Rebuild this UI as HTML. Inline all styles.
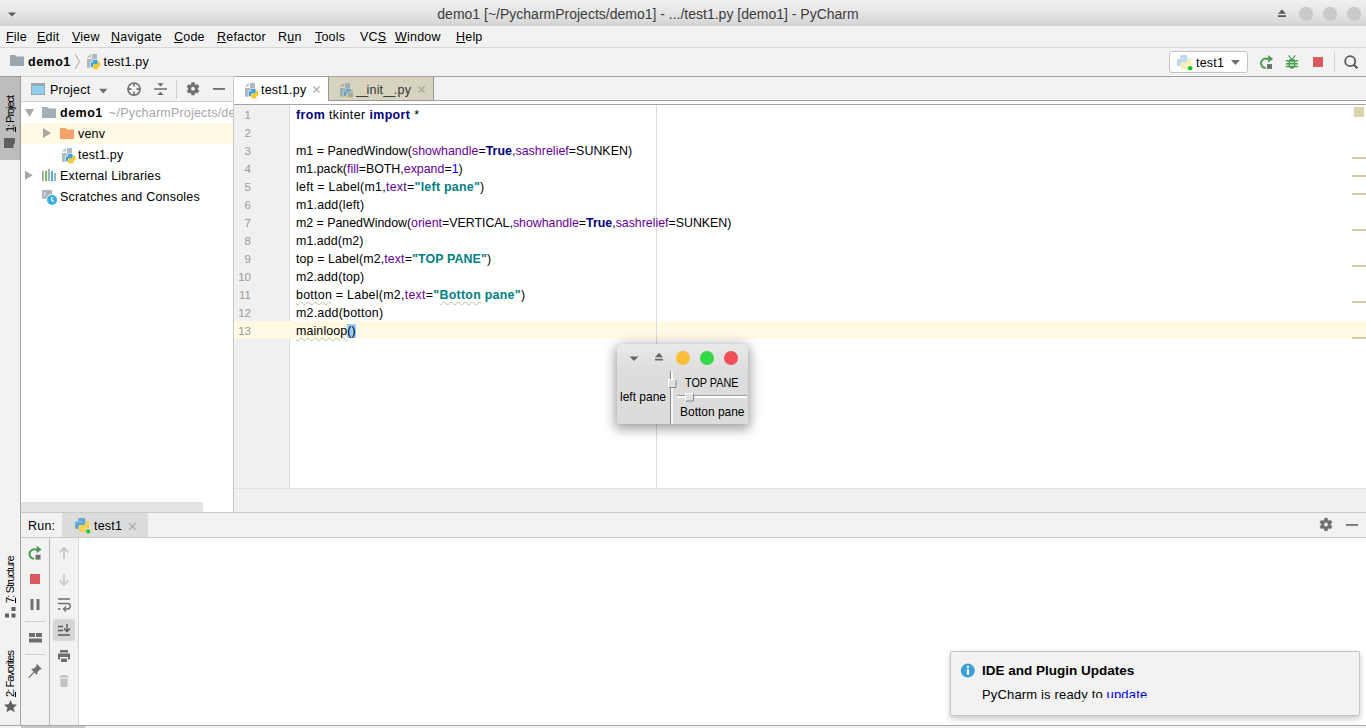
<!DOCTYPE html>
<html><head><meta charset="utf-8"><title>PyCharm</title>
<style>
*{box-sizing:border-box;margin:0;padding:0}
html,body{width:1366px;height:728px;overflow:hidden;background:#f2f2f2}
body{font-family:"Liberation Sans",sans-serif;font-size:12.5px;letter-spacing:.2px;color:#000;position:relative}
.abs{position:absolute}
.tk{font-size:13px;letter-spacing:0;transform-origin:0 0}
.vt{transform-origin:0 0;transform:rotate(-90deg);font-size:11px;letter-spacing:-1.050px;line-height:16px}
.t{position:absolute;white-space:nowrap;line-height:16px}
u{text-decoration:underline;text-underline-offset:1px}
#titlebar{left:0;top:0;width:1366px;height:26px;background:linear-gradient(#f0f0f0,#e7e7e7 45%,#d3d3d3)}
#title{left:0;width:1296px;top:6px;text-align:center;font-size:14px;letter-spacing:0;color:#3c3c3c}
#menubar{left:0;top:26px;width:1366px;height:22px;background:#f2f2f2;border-bottom:1px solid #d6d6d6}
#navbar{left:0;top:48px;width:1366px;height:29px;background:#f2f2f2;border-bottom:1px solid #d4d4d4}
.code{font-size:12.4px;letter-spacing:0;line-height:18px;margin-top:1px}
.kw{color:#000080;font-weight:bold}
.pa{color:#660099}
.st{color:#008080;font-weight:bold}
.nu{color:#0000ff}
.ln{margin-top:1px;position:absolute;left:234px;width:17px;text-align:right;color:#999;font-size:11.5px;letter-spacing:0;line-height:18px}
.wav{text-decoration:underline wavy #b9c79a 1px;text-underline-offset:2px}
</style></head><body>

<!-- title bar -->
<div id="titlebar" class="abs"></div>
<div id="title" class="t">demo1 [~/PycharmProjects/demo1] - .../test1.py [demo1] - PyCharm</div>
<svg class="abs" style="left:0;top:0" width="1366" height="26">
 <path d="M8 12.5h8l-4 4z" fill="#5a5a5a"/>
 <path d="M1278 13.800l4-4.300 4 4.300zM1278 15.200h8v1.700h-8z" fill="#5a5a5a"/>
 <circle cx="1306" cy="13.7" r="7" fill="#c9c9c9"/><circle cx="1330" cy="13.7" r="7" fill="#c9c9c9"/><circle cx="1354" cy="13.7" r="7" fill="#c9c9c9"/>
</svg>

<!-- menu bar -->
<div id="menubar" class="abs"></div>
<div class="t" style="left:6px;top:29px"><u>F</u>ile</div>
<div class="t" style="left:37px;top:29px"><u>E</u>dit</div>
<div class="t" style="left:72px;top:29px"><u>V</u>iew</div>
<div class="t" style="left:111px;top:29px"><u>N</u>avigate</div>
<div class="t" style="left:174px;top:29px"><u>C</u>ode</div>
<div class="t" style="left:217px;top:29px"><u>R</u>efactor</div>
<div class="t" style="left:278px;top:29px">R<u>u</u>n</div>
<div class="t" style="left:315px;top:29px"><u>T</u>ools</div>
<div class="t" style="left:360px;top:29px">VC<u>S</u></div>
<div class="t" style="left:395px;top:29px"><u>W</u>indow</div>
<div class="t" style="left:456px;top:29px"><u>H</u>elp</div>

<!-- nav bar -->
<div id="navbar" class="abs"></div>
<svg class="abs" style="left:0;top:48px" width="160" height="28">
 <path d="M10 7h5l1.5 1.5H24V18H10z" fill="#9aa7b0"/>
 <path d="M75 6l4.5 7.5L75 21" fill="none" stroke="#a5a5a5" stroke-width="1"/>
 <g transform="translate(86,5)"><use href="#pyfile"/></g>
</svg>
<div class="t" style="left:28px;top:54px;font-weight:bold;letter-spacing:.5px">demo1</div>
<div class="t" style="left:103.5px;top:54px">test1.py</div>


<!-- left strip -->
<div class="abs" style="left:0;top:77px;width:21px;height:649px;background:#f2f2f2;border-right:1px solid #a6a6a6"></div>
<div class="abs" style="left:0;top:76px;width:21px;height:84px;background:#bdbdbd;border-top:1px solid #9a9a9a;border-right:1px solid #9a9a9a"></div>
<div class="t vt" style="left:2px;top:132px;width:16px">&#8203;<u>1</u>: Project</div>
<svg class="abs" style="left:3px;top:136px" width="14" height="14"><path d="M1 2h11v5l-1.500 1.500V12H1z" fill="#5f5f5f"/></svg>
<div class="t vt" style="left:2px;top:603px;letter-spacing:-.85px">&#8203;<u>7</u>: Structure</div>
<svg class="abs" style="left:4px;top:606px" width="14" height="14"><path d="M7.500 1h4v4h-4zM1 7.500h4v4H1zM7.500 7.500h4v4h-4z" fill="#5f5f5f"/></svg>
<div class="t vt" style="left:2px;top:697px;letter-spacing:-.95px">&#8203;<u>2</u>: Favorites</div>
<svg class="abs" style="left:3px;top:699px" width="16" height="16"><path d="M7.500 1l1.900 4.300 4.600.4-3.500 3 1.100 4.600-4.100-2.500-4.100 2.500 1.100-4.600-3.500-3 4.600-.4z" fill="#5f5f5f"/></svg>

<!-- project panel -->
<div class="abs" style="left:21px;top:77px;width:212px;height:25px;background:#f2f2f2;border-bottom:1px solid #d2d2d2"></div>
<div class="abs" style="left:21px;top:102px;width:212px;height:410px;background:#fff"></div>
<div class="abs" style="left:233px;top:77px;width:1px;height:435px;background:#c9c9c9"></div>
<svg class="abs" style="left:21px;top:77px" width="212" height="25">
 <rect x="10.500" y="6.500" width="13" height="11" fill="#8fd0ee" stroke="#9aa7b0"/><rect x="10" y="6" width="14" height="3" fill="#9aa7b0"/>
 <path d="M78 11.800h8.400l-4.200 4.700z" fill="#6e6e6e"/>
 <g fill="none" stroke="#6e6e6e" stroke-width="1.600"><circle cx="113" cy="12.100" r="6.100"/><path d="M113 6v3.600M113 14.600v3.600M106.900 12.100h3.600M115.500 12.100h3.600"/></g>
 <path d="M133 11.200h13v1.500h-13zM136.300 6.200h6.400l-3.200 3.400zM136.300 18.100h6.400l-3.200-3.400z" fill="#6e6e6e"/>
 <path d="M155.500 3v19" stroke="#d0d0d0"/>
 <g transform="translate(172,11.800) scale(.95)"><use href="#gear"/></g>
 <path d="M192 11h12v1.800h-12z" fill="#6e6e6e"/>
</svg>
<div class="t" style="left:50px;top:82px">Project</div>
<div class="abs" style="left:21px;top:123px;width:212px;height:21px;background:#fffae3"></div>
<svg class="abs" style="left:21px;top:102px" width="212" height="106">
 <path d="M4 7h9l-4.500 8z" fill="#a6a6a6"/>
 <path d="M21 5h5.500l1.500 1.500H35V16H21z" fill="#a3afb7"/>
 <path d="M22 26l8 5-8 5z" fill="#a6a6a6"/>
 <path d="M39 26h5.500l1.500 1.500H53V37H39z" fill="#f4a26b"/>
 <g transform="translate(40,45)"><use href="#pyfile"/></g>
 <path d="M4 68.700l7.800 4.500-7.800 4.500z" fill="#a6a6a6"/>
 <g fill="none" stroke-width="1.800"><path d="M21.900 69v9.900M28 67.100v11.800M34.100 71v7.900" stroke="#9aa7b0"/><path d="M25 69v9.900" stroke="#62b543"/><path d="M31 69v9.900" stroke="#35a5dd"/></g>
 <path d="M21 88.100h10v8.700H21z" fill="#a9b4bb"/><path d="M22.300 89.800l2.400 2-2.400 2" stroke="#f4f4f4" fill="none" stroke-width="1"/>
 <circle cx="31" cy="97.900" r="5.800" fill="#fff"/><circle cx="31" cy="97.900" r="5" fill="#3cb0e0"/><path d="M30.800 95v3l1.800 1.500" stroke="#fff" fill="none" stroke-width="1.200"/>
</svg>
<div class="t" style="left:60px;top:104.500px;font-weight:bold;letter-spacing:.5px">demo1</div>
<div class="t" style="left:109px;top:104.500px;color:#a6a6a6;width:124px;overflow:hidden">~/PycharmProjects/demo1</div>
<div class="t" style="left:78px;top:125.500px">venv</div>
<div class="t" style="left:78px;top:146.500px">test1.py</div>
<div class="t" style="left:60px;top:167.500px">External Libraries</div>
<div class="t" style="left:60px;top:188.500px">Scratches and Consoles</div>
<div class="abs" style="left:21px;top:502px;width:182px;height:10px;background:#e3e3e3"></div>


<!-- editor tabs -->
<div class="abs" style="left:234px;top:76px;width:1132px;height:1px;background:#a3a3a3"></div>
<div class="abs" style="left:234px;top:77px;width:1132px;height:24px;background:#f2f2f2;border-bottom:1px solid #a3a3a3"></div>
<div class="abs" style="left:234px;top:101px;width:1132px;height:3px;background:#fff"></div>
<div class="abs" style="left:234px;top:104px;width:1132px;height:1px;background:#a3a3a3"></div>
<div class="abs" style="left:234px;top:77px;width:94px;height:27px;background:#fff"></div>
<div class="abs" style="left:328px;top:77px;width:106px;height:24px;background:#d6d4bf;border:1px solid #979797;border-top:0"></div>
<svg class="abs" style="left:234px;top:77px" width="210" height="24">
 <g transform="translate(10,5)"><use href="#pyfile"/></g>
 <path d="M79.500 9.500l6 6m0-6l-6 6" stroke="#a8a8a8" stroke-width="1.100"/>
 <g transform="translate(105,5)" opacity=".85">
  <path d="M1 4.600L4.700 1v3.600z" fill="#9aa7b0"/><path d="M6 1h5v13.800H1V6h5z" fill="#9aa7b0"/>
  <g transform="translate(4.700,6.800) scale(.67)"><use href="#pylogo" stroke="#d6d4bf" stroke-width="2.400"/><use href="#pyhalf" fill="#3e9fdb"/><use href="#pyhalf" fill="#fcc81c" transform="rotate(180 7.150 7.050)"/></g>
  <path d="M9.800 10.600v-1.200a1.700 1.700 0 0 1 3.400 0v1.200" fill="none" stroke="#97a3ab" stroke-width="1"/><rect x="8.800" y="10.600" width="5.400" height="4.700" fill="#97a3ab" stroke="#d6d4bf" stroke-width=".5"/>
 </g>
 <path d="M184.500 9.500l6 6m0-6l-6 6" stroke="#a4a69c" stroke-width="1.100"/>
</svg>
<div class="t" style="left:261px;top:81.500px">test1.py</div>
<div class="t" style="left:356px;top:81.500px;color:#333"><span style="letter-spacing:-1.700px">__</span>init<span style="letter-spacing:-1.700px">__</span>.py</div>

<!-- editor -->
<div class="abs" style="left:234px;top:105px;width:1132px;height:383px;background:#fff"></div>
<div class="abs" style="left:234px;top:105px;width:56px;height:383px;background:#f0f0f0;border-right:1px solid #d9d9d9"></div>
<div class="abs" style="left:234px;top:321px;width:1132px;height:18px;background:#fffae3"></div>
<div class="abs" style="left:656px;top:105px;width:1px;height:383px;background:#dcdcdc"></div>
<div class="abs" style="left:234px;top:488px;width:1132px;height:24px;background:#f0f0f0;border-top:1px solid #e0e0e0"></div>
<div class="abs" style="left:21px;top:512px;width:1345px;height:1px;background:#c9c9c9"></div>
<div class="ln" style="top:105px">1</div><div class="t code" style="left:296px;top:105px;letter-spacing:0.400px"><span class="kw">from</span> tkinter <span class="kw">import</span> *</div>
<div class="ln" style="top:123px">2</div>
<div class="ln" style="top:141px">3</div><div class="t code" style="left:296px;top:141px;letter-spacing:0.033px">m1 = PanedWindow(<span class="pa">showhandle</span>=<span class="kw">True</span>,<span class="pa">sashrelief</span>=SUNKEN)</div>
<div class="ln" style="top:159px">4</div><div class="t code" style="left:296px;top:159px;letter-spacing:-0.001px">m1.pack(<span class="pa">fill</span>=BOTH,<span class="pa">expand</span>=<span class="nu">1</span>)</div>
<div class="ln" style="top:177px">5</div><div class="t code" style="left:296px;top:177px;letter-spacing:0.263px">left = Label(m1,<span class="pa">text</span>=<span class="st">"left pane"</span>)</div>
<div class="ln" style="top:195px">6</div><div class="t code" style="left:296px;top:195px;letter-spacing:0.181px">m1.add(left)</div>
<div class="ln" style="top:213px">7</div><div class="t code" style="left:296px;top:213px;letter-spacing:-0.017px">m2 = PanedWindow(<span class="pa">orient</span>=VERTICAL,<span class="pa">showhandle</span>=<span class="kw">True</span>,<span class="pa">sashrelief</span>=SUNKEN)</div>
<div class="ln" style="top:231px">8</div><div class="t code" style="left:296px;top:231px;letter-spacing:0.070px">m1.add(m2)</div>
<div class="ln" style="top:249px">9</div><div class="t code" style="left:296px;top:249px;letter-spacing:0.117px">top = Label(m2,<span class="pa">text</span>=<span class="st">"TOP PANE"</span>)</div>
<div class="ln" style="top:267px">10</div><div class="t code" style="left:296px;top:267px;letter-spacing:0.135px">m2.add(top)</div>
<div class="ln" style="top:285px">11</div><div class="t code" style="left:296px;top:285px;letter-spacing:0.278px"><span class="wav">botton</span> = Label(m2,<span class="pa">text</span>=<span class="st">"<span class="wav">Botton</span> pane"</span>)</div>
<div class="ln" style="top:303px">12</div><div class="t code" style="left:296px;top:303px;letter-spacing:0.233px">m2.add(botton)</div>
<div class="ln" style="top:321px">13</div><div class="t code" style="left:296px;top:321px;letter-spacing:0.134px"><span class="wav">mainloop</span><span style="background:#99ccff">()</span></div>
<div class="abs" style="left:1354px;top:107px;width:10px;height:10px;background:#dbd2ae"></div>
<div class="abs" style="left:1352px;top:157px;width:14px;height:2px;background:#d6cba4"></div>
<div class="abs" style="left:1352px;top:175px;width:14px;height:2px;background:#d6cba4"></div>
<div class="abs" style="left:1352px;top:193px;width:14px;height:2px;background:#d6cba4"></div>
<div class="abs" style="left:1352px;top:229px;width:14px;height:2px;background:#d6cba4"></div>
<div class="abs" style="left:1352px;top:265px;width:14px;height:2px;background:#d6cba4"></div>
<div class="abs" style="left:1352px;top:301px;width:14px;height:2px;background:#d6cba4"></div>
<div class="abs" style="left:1352px;top:337px;width:14px;height:2px;background:#d6cba4"></div>


<!-- toolbar right -->
<div class="abs" style="left:1169px;top:51px;width:79px;height:22px;background:#fff;border:1px solid #c4c4c4;border-radius:3px"></div>
<svg class="abs" style="left:1160px;top:48px" width="206" height="28">
 <g transform="translate(17,7)" opacity=".42"><use href="#pylogo"/></g>
 <circle cx="30.100" cy="20.200" r="2.300" fill="#1ec81e"/>
 <path d="M71 12h9l-4.500 5z" fill="#6e6e6e"/>
 <g transform="translate(105.700,15.300)"><use href="#rerun"/></g>
 <g transform="translate(131.900,14)"><use href="#bug"/></g>
 <rect x="153" y="9" width="10" height="10" fill="#db5860"/>
 <path d="M174.500 4v20" stroke="#cfcfcf"/>
 <circle cx="190.200" cy="13.200" r="5" fill="none" stroke="#595959" stroke-width="1.800"/><path d="M193.800 16.800l3.600 3.500" stroke="#595959" stroke-width="2.200"/>
</svg>
<div class="t" style="left:1196px;top:55px">test1</div>

<!-- run panel -->
<div class="abs" style="left:21px;top:513px;width:1345px;height:24px;background:#f2f2f2"></div>
<div class="abs" style="left:21px;top:537px;width:1345px;height:1px;background:#c9c9c9"></div>
<div class="abs" style="left:62px;top:513px;width:86px;height:24px;background:#dcdcdc"></div>
<div class="t" style="left:28px;top:517.500px">Run:</div>
<div class="t" style="left:94px;top:517.500px">test1</div>
<div class="abs" style="left:21px;top:538px;width:1345px;height:188px;background:#fff"></div>
<div class="abs" style="left:21px;top:538px;width:29px;height:188px;background:#f2f2f2;border-right:1px solid #b4b4b4"></div>
<div class="abs" style="left:50px;top:538px;width:29px;height:188px;background:#f2f2f2;border-right:1px solid #d4d4d4"></div>
<div class="abs" style="left:53px;top:619px;width:22px;height:22px;background:#d6d6d6;border-radius:3px"></div>
<svg class="abs" style="left:21px;top:513px" width="1345" height="213">
 <g transform="translate(54,4.900)"><use href="#pylogo"/></g>
 <circle cx="67.200" cy="18.400" r="2.300" fill="#1ec81e" stroke="#dcdcdc" stroke-width=".5"/>
 <path d="M108 10l7 7m0-7l-7 7" stroke="#a8a8a8" stroke-width="1.100"/>
 <g transform="translate(1305,11.500) scale(.95)"><use href="#gear"/></g>
 <path d="M1325 11h12v1.800h-12z" fill="#6e6e6e"/>
 <!-- col 1 -->
 <g transform="translate(13.200,41)"><use href="#rerun"/></g>
 <rect x="9" y="61" width="10" height="10" fill="#db5860"/>
 <path d="M9.500 86h3v11h-3zM15.500 86h3v11h-3z" fill="#6e6e6e"/>
 <path d="M4 108.500h20M4 141.500h20" stroke="#d0d0d0"/>
 <path d="M8 120h6v4H8zM15 120h6v4h-6zM8 125.500h13v4H8z" fill="#6e6e6e"/>
 <path d="M15.500 150.500l5.500 5.500-2 .5-2.500 2.500-.5 3-2.500-2.500-5.500 5.500-.8-.8 5.500-5.500L10 156l3-.5 2.500-2.500z" fill="#6e6e6e"/>
 <!-- col 2 -->
 <g fill="none" stroke="#bdbdbd" stroke-width="1.400"><path d="M43 46v-11M38.500 39.500L43 35l4.500 4.500"/><path d="M43 61v11M38.500 67.500L43 72l4.500-4.500"/></g>
 <g fill="none" stroke="#6e6e6e" stroke-width="1.400"><path d="M37 86h12M37 90.500h9.500a2.500 2.500 0 0 1 0 5.500H43M37 96h2.500"/><path d="M45 93.500L42.500 96l2.500 2.500" stroke-width="1.200"/></g>
 <g fill="none" stroke="#5a5a5a" stroke-width="1.400"><path d="M37 113.500h5M37 117.500h5M37 122h12M46 111v7M43 115.500l3 3 3-3"/></g>
 <path d="M39 137h8v2.500h-8zM37 140.500h12v6h-2v-2.500h-8v2.500h-2zM40 145.500h6v3.500h-6z" fill="#6e6e6e"/>
 <path d="M40.500 162h5v1h2v1.500h-9V163h2zM39 165.500h8l-.7 8.500h-6.600z" fill="#c4c4c4"/>
</svg>

<!-- bottom -->
<div class="abs" style="left:0;top:725px;width:1366px;height:1px;background:#a8a8a8"></div>
<div class="abs" style="left:0;top:726px;width:1366px;height:2px;background:#f2f2f2"></div>
<div class="abs" style="left:21px;top:726px;width:64px;height:2px;background:#c8c8c8"></div>

<!-- notification -->
<div class="abs" style="left:950px;top:651px;width:410px;height:65px;background:#f2f2f2;border:1px solid #c4c4c4;border-radius:2px;box-shadow:0 3px 6px rgba(0,0,0,.22)"></div>
<svg class="abs" style="left:960px;top:663px" width="16" height="16"><circle cx="7.800" cy="7.600" r="7" fill="#3d9fd8"/><path d="M6.800 6.300h2.200v5.500H6.800zM6.800 3h2.200v2.100H6.800z" fill="#fff"/></svg>
<div class="t" style="left:982px;top:663px;font-weight:bold;font-size:13.500px;letter-spacing:0">IDE and Plugin Updates</div>
<div class="t" style="left:982px;top:687px;font-size:13px;letter-spacing:.16px">PyCharm is ready to <span style="color:#0000e6;text-decoration:underline">update</span></div>
<div class="abs" style="left:1080px;top:698px;width:279px;height:17px;background:linear-gradient(90deg,rgba(242,242,242,.2),#f2f2f2 8px)"></div>


<!-- floating tk window -->
<div class="abs" style="left:617px;top:344px;width:131px;height:80px;border-radius:6px 6px 1px 1px;box-shadow:0 3px 12px 2px rgba(0,0,0,.38);background:#dcdcdc"></div>
<div class="abs" style="left:617px;top:344px;width:131px;height:26px;border-radius:6px 6px 0 0;background:linear-gradient(#e9e9e9,#dedede)"></div>
<svg class="abs" style="left:617px;top:344px" width="131" height="80">
 <path d="M12.500 12.500h9l-4.500 4.500z" fill="#666"/>
 <path d="M38 13.200l4-4.500 4 4.500zM38 14.800h8v1.800h-8z" fill="#666"/>
 <circle cx="66" cy="14" r="7" fill="#f9c038"/><circle cx="90" cy="14" r="7" fill="#32d846"/><circle cx="114" cy="14" r="7" fill="#f04e58"/>
 <path d="M53.500 27v53" stroke="#8a8a8a"/><path d="M55 27v53" stroke="#fff" stroke-width="1.600"/>
 <rect x="51.500" y="35.500" width="7" height="7.500" fill="#e0e0e0"/><path d="M51.500 43.500v-8h7.500" fill="none" stroke="#fff"/><path d="M52 43.500h7v-8" fill="none" stroke="#8a8a8a"/>
 <path d="M60 51.500h70" stroke="#9a9a9a"/><path d="M60 53h70" stroke="#fff" stroke-width="1.800"/>
 <rect x="68.500" y="49.500" width="7.500" height="7" fill="#e0e0e0"/><path d="M68.500 57v-7.500h8" fill="none" stroke="#fff"/><path d="M69 57h7.500v-7.500" fill="none" stroke="#8a8a8a"/>
</svg>
<div class="t tk" style="left:620px;top:388.500px;transform:scaleX(.922)">left pane</div>
<div class="t tk" style="left:684.500px;top:374.500px;transform:scaleX(.832)">TOP PANE</div>
<div class="t tk" style="left:679.500px;top:404px;transform:scaleX(.92)">Botton pane</div>

<svg width="0" height="0" style="position:absolute">
 <defs>
  <g id="pyfile">
   <path d="M1 4.600L4.700 1v3.600z" fill="#9aa7b0" opacity=".8"/><path d="M6 1h5v13.800H1V6h5z" fill="#9aa7b0" opacity=".8"/>
   <g transform="translate(4.700,6.800) scale(.67)"><use href="#pylogo" stroke="#f4f4f4" stroke-width="2.400"/><use href="#pyhalf" fill="#3e9fdb"/><use href="#pyhalf" fill="#fcc81c" transform="rotate(180 7.150 7.050)"/></g>
  </g>
  <path id="pyhalf" d="M3.100 1.500Q3.100 0 4.600 0H8.800Q10.300 0 10.300 1.500V5.500Q10.300 7 8.800 7H5Q3.500 7 3.500 8.500V11.200H1.500Q0 11.200 0 9.700V5.200Q0 3.700 1.500 3.700H7V3.200H3.100Z"/>
  <g id="pylogo"><use href="#pyhalf" fill="#5fa8d8"/><use href="#pyhalf" fill="#f8d24e" transform="rotate(180 7.150 7.050)"/></g>
<g id="gear"><path fill="#6e6e6e" fill-rule="evenodd" stroke="#6e6e6e" stroke-width=".6" stroke-linejoin="round" d="M-1.73 -4.59L-1.46 -6.54L1.46 -6.54L1.73 -4.59L3.11 -3.79L4.93 -4.54L6.39 -2.00L4.83 -0.80L4.83 0.80L6.39 2.00L4.93 4.54L3.11 3.79L1.73 4.59L1.46 6.54L-1.46 6.54L-1.73 4.59L-3.11 3.79L-4.93 4.54L-6.39 2.00L-4.83 0.80L-4.83 -0.80L-6.39 -2.00L-4.93 -4.54L-3.11 -3.79ZM0-2.300a2.300 2.300 0 1 0 0 4.600 2.300 2.300 0 0 0 0-4.600z"/></g>
<g id="rerun"><path d="M2.600-3.900A4.700 4.700 0 1 0 0 4.700" fill="none" stroke="#499c54" stroke-width="2"/><path d="M2.400-8.300L7.500-4.500 2.400-.7z" fill="#499c54"/><rect x="1.300" y=".8" width="5" height="4.800" fill="#6e6e6e"/></g>
  <g id="bug"><ellipse cx="0" cy="1.400" rx="3.500" ry="5.400" fill="#499c54"/><path d="M-1.300-3.800L-3.200-6.600M1.300-3.800L3.200-6.600" stroke="#499c54" stroke-width="1.300" fill="none"/><path d="M-6-1.300h12M-6 1.700h12M-6 4.500h12" stroke="#499c54" stroke-width="1.500" fill="none"/><path d="M-2 .2h4M-2 3.100h4" stroke="#f2f2f2" stroke-width="1.100"/></g>
 </defs>
</svg>

</body></html>
